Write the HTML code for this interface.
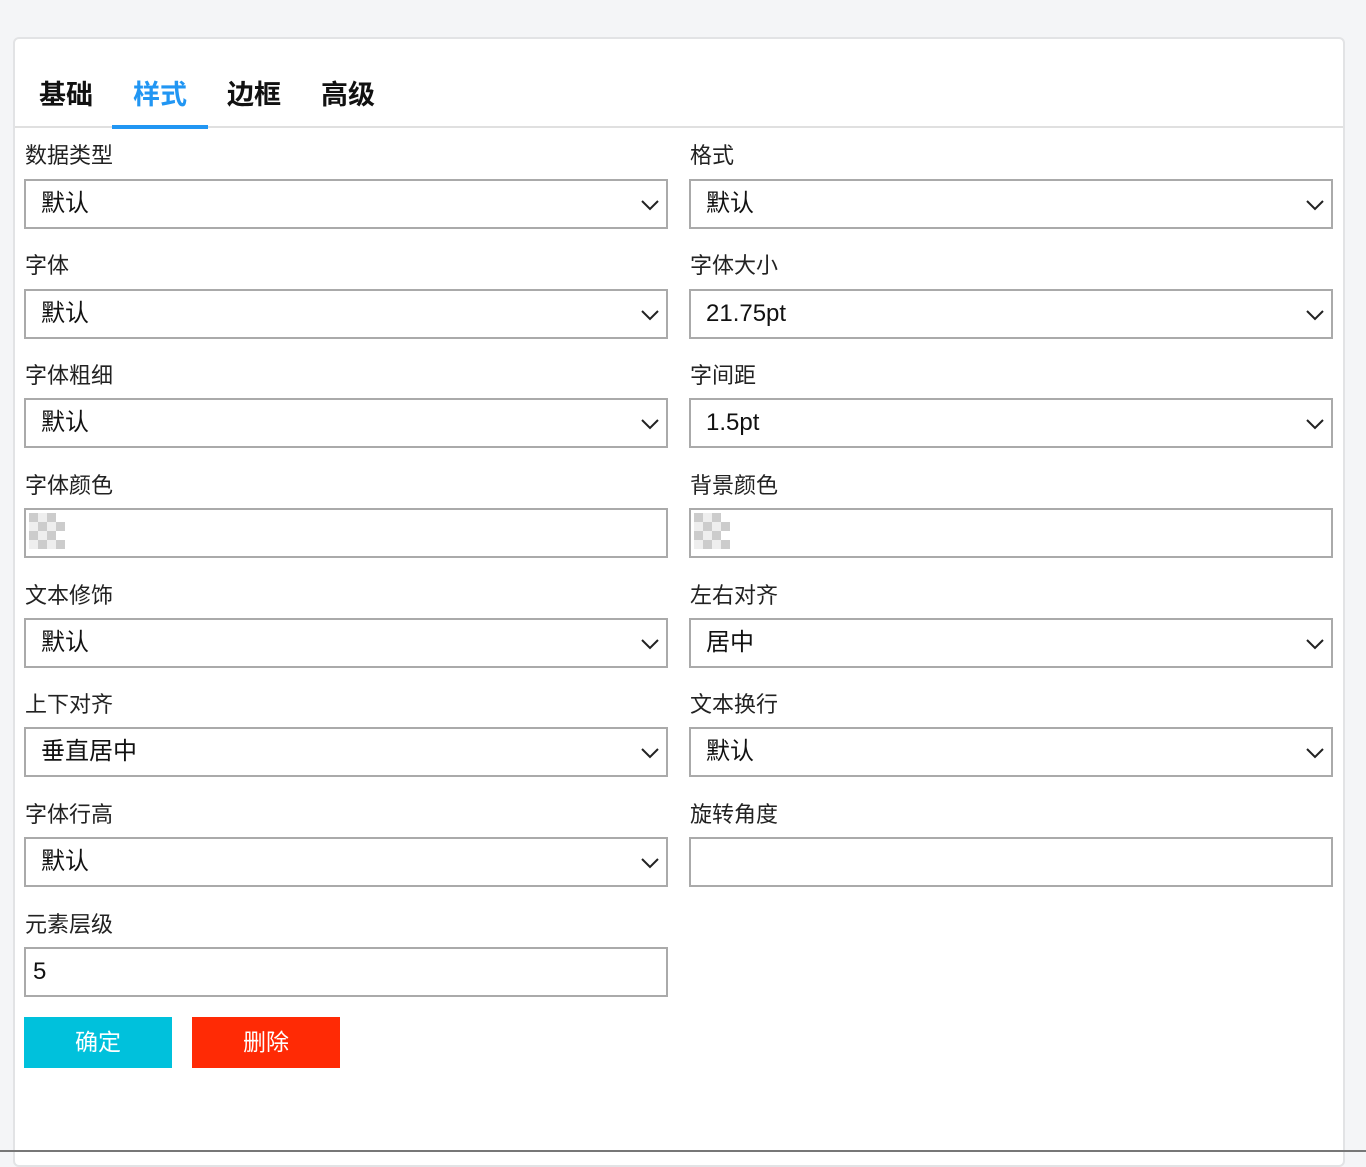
<!DOCTYPE html>
<html><head><meta charset="utf-8"><style>
*{box-sizing:border-box;margin:0;padding:0}
body{width:1366px;height:1152px;background:#f4f5f7;font-family:"Liberation Sans","Noto Sans CJK SC",sans-serif;position:relative;overflow:hidden;color:#111}
.card{position:absolute;left:13px;top:37px;width:1332px;height:1130px;background:#fff;border:2px solid #e2e3e5;border-radius:6px}
.tab{position:absolute;top:77px;font-size:27px;font-weight:bold;line-height:36px}
.line{position:absolute;left:15px;top:126px;width:1328px;height:2px;background:#e0e0e0}
.ul{position:absolute;left:112px;top:125px;width:96px;height:4px;background:#2196f3}
.lbl{position:absolute;font-size:22px;line-height:28px;color:#222}
.f{position:absolute;width:644px;height:50px;border:2px solid #aaa;background:#fff;font-size:24px;line-height:46px;padding-left:15px;color:#111}
.f svg{position:absolute;right:6px;top:18px}
.chk{position:absolute;left:4px;top:4px;width:36px;height:36px;background:
linear-gradient(45deg,transparent 0,transparent 0);}
.btn{position:absolute;top:1017px;width:148px;height:51px;color:#fff;font-size:23px;line-height:51px;text-align:center}
.bl{position:absolute;left:0;top:1150px;width:1366px;height:2px;background:#777}
</style></head><body>
<div class="card"></div>
<div class="tab" style="left:39px">基础</div>
<div class="tab" style="left:133px;color:#2196f3">样式</div>
<div class="tab" style="left:227px">边框</div>
<div class="tab" style="left:321px">高级</div>
<div class="line"></div><div class="ul"></div>

<div class="lbl" style="left:25px;top:142px">数据类型</div>
<div class="lbl" style="left:690px;top:142px">格式</div>
<div class="f" style="left:24px;top:179px">默认<svg width="20" height="12"><path d="M2 2l8 8 8-8" fill="none" stroke="#222" stroke-width="2"/></svg></div>
<div class="f" style="left:689px;top:179px">默认<svg width="20" height="12"><path d="M2 2l8 8 8-8" fill="none" stroke="#222" stroke-width="2"/></svg></div>

<div class="lbl" style="left:25px;top:252px">字体</div>
<div class="lbl" style="left:690px;top:252px">字体大小</div>
<div class="f" style="left:24px;top:289px">默认<svg width="20" height="12"><path d="M2 2l8 8 8-8" fill="none" stroke="#222" stroke-width="2"/></svg></div>
<div class="f" style="left:689px;top:289px">21.75pt<svg width="20" height="12"><path d="M2 2l8 8 8-8" fill="none" stroke="#222" stroke-width="2"/></svg></div>

<div class="lbl" style="left:25px;top:362px">字体粗细</div>
<div class="lbl" style="left:690px;top:362px">字间距</div>
<div class="f" style="left:24px;top:398px">默认<svg width="20" height="12"><path d="M2 2l8 8 8-8" fill="none" stroke="#222" stroke-width="2"/></svg></div>
<div class="f" style="left:689px;top:398px">1.5pt<svg width="20" height="12"><path d="M2 2l8 8 8-8" fill="none" stroke="#222" stroke-width="2"/></svg></div>

<div class="lbl" style="left:25px;top:472px">字体颜色</div>
<div class="lbl" style="left:690px;top:472px">背景颜色</div>
<div class="f" style="left:24px;top:508px"><svg style="left:3px;top:3px;right:auto" width="36" height="36"><g fill="#ccc"><rect x="0" y="0" width="9" height="9"/><rect x="18" y="0" width="9" height="9"/><rect x="9" y="9" width="9" height="9"/><rect x="27" y="9" width="9" height="9"/><rect x="0" y="18" width="9" height="9"/><rect x="18" y="18" width="9" height="9"/><rect x="9" y="27" width="9" height="9"/><rect x="27" y="27" width="9" height="9"/></g><g fill="#eee"><rect x="9" y="0" width="9" height="9"/><rect x="0" y="9" width="9" height="9"/><rect x="18" y="9" width="9" height="9"/><rect x="9" y="18" width="9" height="9"/><rect x="0" y="27" width="9" height="9"/><rect x="18" y="27" width="9" height="9"/></g></svg></div>
<div class="f" style="left:689px;top:508px"><svg style="left:3px;top:3px;right:auto" width="36" height="36"><g fill="#ccc"><rect x="0" y="0" width="9" height="9"/><rect x="18" y="0" width="9" height="9"/><rect x="9" y="9" width="9" height="9"/><rect x="27" y="9" width="9" height="9"/><rect x="0" y="18" width="9" height="9"/><rect x="18" y="18" width="9" height="9"/><rect x="9" y="27" width="9" height="9"/><rect x="27" y="27" width="9" height="9"/></g><g fill="#eee"><rect x="9" y="0" width="9" height="9"/><rect x="0" y="9" width="9" height="9"/><rect x="18" y="9" width="9" height="9"/><rect x="9" y="18" width="9" height="9"/><rect x="0" y="27" width="9" height="9"/><rect x="18" y="27" width="9" height="9"/></g></svg></div>

<div class="lbl" style="left:25px;top:582px">文本修饰</div>
<div class="lbl" style="left:690px;top:582px">左右对齐</div>
<div class="f" style="left:24px;top:618px">默认<svg width="20" height="12"><path d="M2 2l8 8 8-8" fill="none" stroke="#222" stroke-width="2"/></svg></div>
<div class="f" style="left:689px;top:618px">居中<svg width="20" height="12"><path d="M2 2l8 8 8-8" fill="none" stroke="#222" stroke-width="2"/></svg></div>

<div class="lbl" style="left:25px;top:691px">上下对齐</div>
<div class="lbl" style="left:690px;top:691px">文本换行</div>
<div class="f" style="left:24px;top:727px">垂直居中<svg width="20" height="12"><path d="M2 2l8 8 8-8" fill="none" stroke="#222" stroke-width="2"/></svg></div>
<div class="f" style="left:689px;top:727px">默认<svg width="20" height="12"><path d="M2 2l8 8 8-8" fill="none" stroke="#222" stroke-width="2"/></svg></div>

<div class="lbl" style="left:25px;top:801px">字体行高</div>
<div class="lbl" style="left:690px;top:801px">旋转角度</div>
<div class="f" style="left:24px;top:837px">默认<svg width="20" height="12"><path d="M2 2l8 8 8-8" fill="none" stroke="#222" stroke-width="2"/></svg></div>
<div class="f" style="left:689px;top:837px"></div>

<div class="lbl" style="left:25px;top:911px">元素层级</div>
<div class="f" style="left:24px;top:947px;padding-left:7px">5</div>

<div class="btn" style="left:24px;background:#00c1dc">确定</div>
<div class="btn" style="left:192px;background:#ff2a05">删除</div>
<div class="bl"></div>
</body></html>
